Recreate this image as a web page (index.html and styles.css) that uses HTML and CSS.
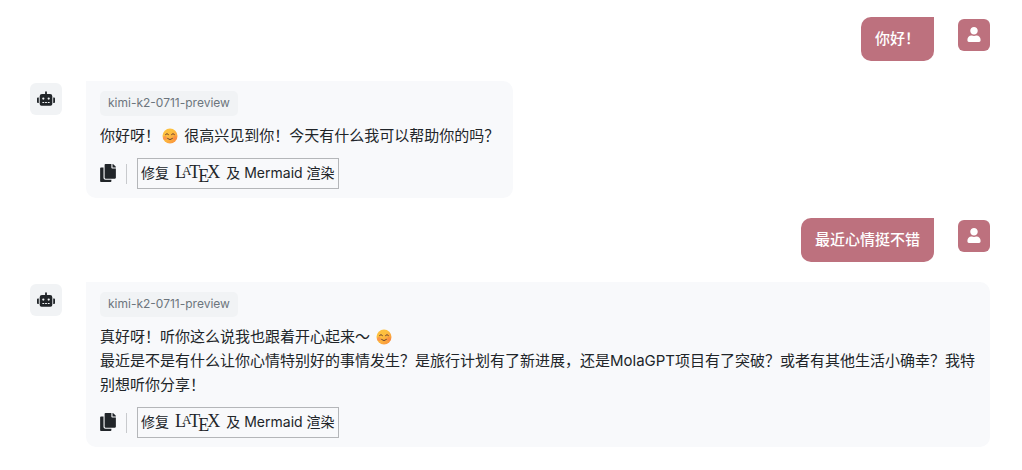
FILE: index.html
```html
<!DOCTYPE html>
<html lang="zh-CN">
<head>
    <meta charset="UTF-8">
    <meta name="viewport" content="width=device-width, initial-scale=1.0">
    <title>MolaGPT</title>
    <link rel="stylesheet" href="styles.css">
</head>
<body>
    <!-- 共用图标 -->
    <svg class="icon-defs" aria-hidden="true">
        <symbol id="icon-user" viewBox="0 0 448 512">
            <path d="M224 256c70.700 0 128-57.300 128-128S294.700 0 224 0 96 57.300 96 128s57.300 128 128 128zm89.600 32h-16.700c-22.200 10.200-46.900 16-72.900 16s-50.600-5.800-72.900-16h-16.700C60.200 288 0 348.200 0 422.400V464c0 26.500 21.500 48 48 48h352c26.500 0 48-21.500 48-48v-41.600c0-74.200-60.200-134.400-134.400-134.400z"/>
        </symbol>
        <symbol id="icon-robot" viewBox="0 0 640 512">
            <path d="M32 224H64V416H32A32 32 0 0 1 0 384V256A32 32 0 0 1 32 224Zm512-48V448a64 64 0 0 1-64 64H160a64 64 0 0 1-64-64V176a80 80 0 0 1 80-80H288V32a32 32 0 0 1 64 0V96H464A80 80 0 0 1 544 176ZM264 256a40 40 0 1 0-40 40A40 40 0 0 0 264 256Zm-8 128H192v32h64Zm96 0H288v32h64ZM456 256a40 40 0 1 0-40 40A40 40 0 0 0 456 256Zm-8 128H384v32h64ZM640 256V384a32 32 0 0 1-32 32H576V224h32A32 32 0 0 1 640 256Z"/>
        </symbol>
        <symbol id="icon-copy" viewBox="0 0 448 512">
            <path d="M320 448v40c0 13.255-10.745 24-24 24H24c-13.255 0-24-10.745-24-24V120c0-13.255 10.745-24 24-24h72v296c0 30.879 25.121 56 56 56h168zm0-344V0H152c-13.255 0-24 10.745-24 24v368c0 13.255 10.745 24 24 24h272c13.255 0 24-10.745 24-24V128H344c-13.200 0-24-10.800-24-24zm120.971-31.029L375.029 7.029A24 24 0 0 0 358.059 0H352v96h96v-6.059a24 24 0 0 0-7.029-16.970z"/>
        </symbol>
        <symbol id="icon-smile" viewBox="0 0 32 32">
            <linearGradient id="face" x1="0" y1="0" x2="1" y2="1">
                <stop offset="0.4" stop-color="#fdc03f"/>
                <stop offset="1" stop-color="#f98a3c"/>
            </linearGradient>
            <circle cx="16" cy="16" r="15" fill="url(#face)"/>
            <circle cx="6" cy="20" r="4" fill="#f9705a" opacity=".5"/>
            <circle cx="26" cy="20" r="4" fill="#f9704a" opacity=".4"/>
            <path d="M7 13q3-4 6 0M19 13q3-4 6 0M11 21q5 5 10 0" fill="none" stroke="#6b4230" stroke-width="2" stroke-linecap="round"/>
        </symbol>
    </svg>

    <main class="chat">
        <div class="message user">
            <div class="bubble">你好！</div>
            <div class="avatar"><svg><use href="#icon-user"/></svg></div>
        </div>

        <div class="message bot">
            <div class="avatar"><svg><use href="#icon-robot"/></svg></div>
            <div class="bubble">
                <span class="model">kimi-k2-0711-preview</span>
                <p class="text">你好呀！<svg class="emoji" role="img" aria-label="微笑"><use href="#icon-smile"/></svg> 很高兴见到你！今天有什么我可以帮助你的吗？</p>
                <div class="actions">
                    <button type="button" class="copy" aria-label="复制"><svg><use href="#icon-copy"/></svg></button>
                    <button type="button" class="fix">修复 <span class="latex">L<span class="a">A</span>T<span class="e">E</span>X</span> 及 Mermaid 渲染</button>
                </div>
            </div>
        </div>

        <div class="message user">
            <div class="bubble">最近心情挺不错</div>
            <div class="avatar"><svg><use href="#icon-user"/></svg></div>
        </div>

        <div class="message bot">
            <div class="avatar"><svg><use href="#icon-robot"/></svg></div>
            <div class="bubble">
                <span class="model">kimi-k2-0711-preview</span>
                <p class="text">真好呀！听你这么说我也跟着开心起来～ <svg class="emoji" role="img" aria-label="微笑"><use href="#icon-smile"/></svg><br>最近是不是有什么让你心情特别好的事情发生？是旅行计划有了新进展，还是MolaGPT项目有了突破？或者有其他生活小确幸？我特别想听你分享！</p>
                <div class="actions">
                    <button type="button" class="copy" aria-label="复制"><svg><use href="#icon-copy"/></svg></button>
                    <button type="button" class="fix">修复 <span class="latex">L<span class="a">A</span>T<span class="e">E</span>X</span> 及 Mermaid 渲染</button>
                </div>
            </div>
        </div>
    </main>
</body>
</html>
```
FILE: styles.css
```css
body {
    margin: 0;
    background-color: #fff;
    color: #212529;
    font-family: Inter, "Noto Sans CJK SC", sans-serif;
    font-size: 15px;
    line-height: 24px;
}

.icon-defs {
    position: absolute;
    width: 0;
    height: 0;
}

.chat {
    display: flex;
    flex-direction: column;
    gap: 20px;
    padding: 17px 32px 20px 30px;
}

/* 消息行 */
.message {
    display: flex;
    align-items: flex-start;
    gap: 24px;
}

.message.user {
    justify-content: flex-end;
}

/* 头像 */
.avatar {
    display: flex;
    flex: none;
    align-items: center;
    justify-content: center;
    width: 32px;
    height: 32px;
    margin-top: 2px;
    border-radius: 6px;
    background-color: #f1f3f5;
}

.avatar svg {
    width: 18px;
    height: 15px;
    padding-bottom: 1px;
    fill: #212529;
}

.user .avatar {
    background-color: #bd717e;
}

.user .avatar svg {
    fill: #fff;
}

/* 气泡 */
.bubble {
    padding: 10px 14px;
    border-radius: 10px;
}

.user .bubble {
    border-top-right-radius: 0;
    background-color: #bd717e;
    color: #fff;
    font-weight: 500;
}

.bot .bubble {
    padding-bottom: 9px;
    border-top-left-radius: 0;
    background-color: #f8f9fb;
}

.model {
    display: block;
    width: fit-content;
    padding: 0 8px 2px;
    border-radius: 5px;
    background-color: #f1f3f5;
    color: #6c757d;
    font-size: 12px;
    line-height: 23px;
}

.text {
    margin: 8px 0 10px;
}

.emoji {
    width: 16px;
    height: 16px;
    margin: 0 2px;
    vertical-align: -3px;
}

/* 操作按钮 */
.actions {
    display: flex;
    align-items: center;
}

button {
    border: none;
    background: none;
    color: inherit;
    font-family: inherit;
    cursor: pointer;
}

.copy {
    height: 20px;
    padding: 0 10px 2px 0;
    border-right: 1px solid #c8cacd;
    margin-right: 10px;
}

.copy svg {
    display: block;
    width: 16px;
    height: 18px;
    fill: #212529;
}

.fix {
    height: 31px;
    padding: 0 3px 2px;
    border: 1px solid #b4b6b9;
    font-size: 14px;
    line-height: 27px;
    white-space: nowrap;
}

.latex {
    margin: 0 2px;
    font-family: "Liberation Serif", serif;
    font-size: 18px;
    line-height: 1;
}

.latex .a {
    margin: 0 -2px 0 -4px;
    font-size: 13px;
    vertical-align: 3px;
}

.latex .e {
    margin: 0 -2px;
    vertical-align: -4px;
}
```
